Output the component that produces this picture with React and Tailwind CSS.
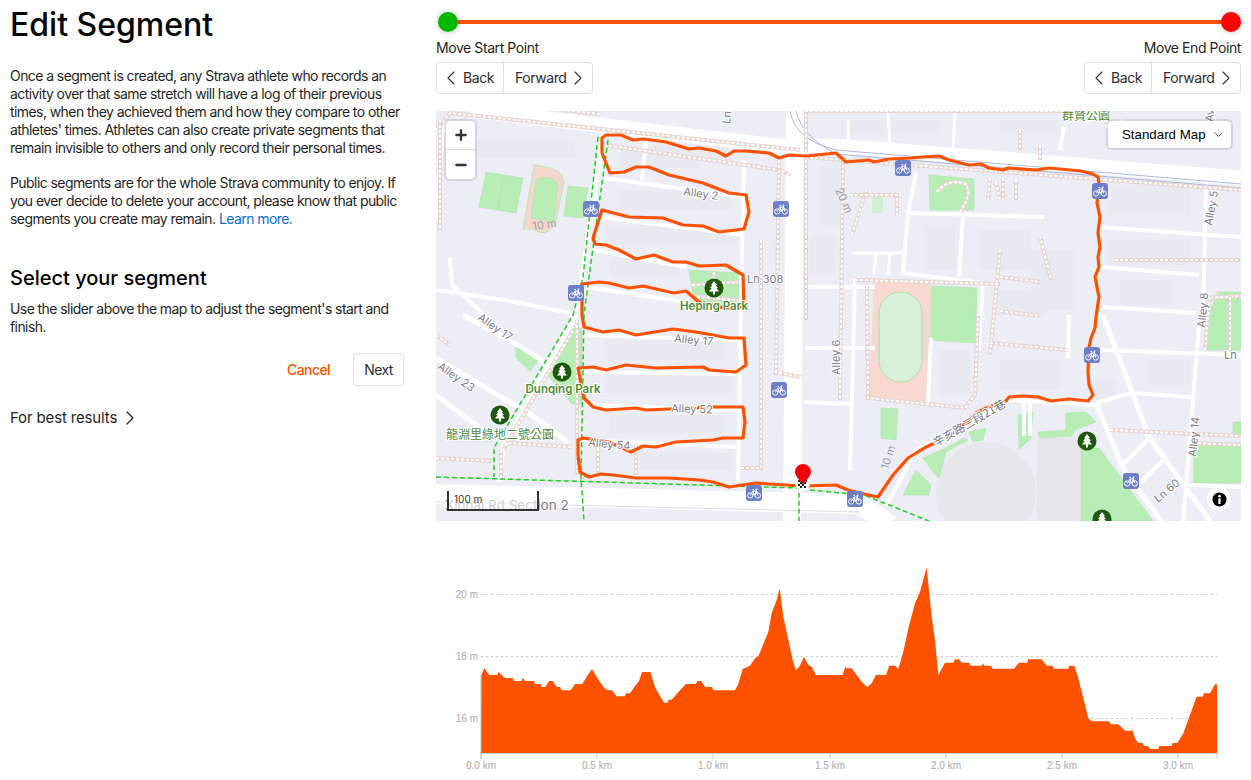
import React from 'react';
import { ChevronLeft, ChevronRight, ChevronDown, Plus, Minus } from 'lucide-react';

const route = '610,173 602,153 602,138 606,135 621,135 633,140 644,139 666,142 689,149 699,148 716,151 726,156 734,151 746,151 769,153 779,158 789,155 806,156 836,153 846,162 869,160 874,162 889,159 911,158 923,157 939,156 949,160 969,165 981,164 989,168 1003,170 1008,168 1036,170 1049,168 1081,171 1093,174 1098,177 1099,183 1097,203 1100,217 1098,233 1100,247 1098,257 1099,267 1095,277 1099,297 1096,317 1095,328 1091,338 1089,348 1088,372 1089,385 1093,395 1088,401 1069,399 1051,401 1038,397 1023,396 1009,397 1006,401 993,405 976,413 961,427 946,438 926,447 908,458 893,475 878,497 864,494 848,490 836,485 803,486 769,484 756,483 729,487 713,482 699,480 669,478 659,478 636,478 613,475 601,474 589,477 580,472 578,455 578,440 583,438 609,442 631,452 643,446 656,447 676,442 713,440 723,438 743,438 745,422 743,407 713,407 669,409 646,410 636,408 606,410 593,407 584,398 578,368 593,367 606,370 626,365 656,368 703,367 709,370 736,372 746,365 744,338 729,338 696,332 673,329 636,335 619,330 603,332 584,327 582,315 582,303 582,284 599,282 609,283 629,288 643,286 674,293 686,291 699,302 723,308 744,307 743,275 726,265 699,266 686,262 673,262 654,255 636,259 619,250 606,245 595,244 593,238 602,210 629,217 663,218 683,225 703,226 719,232 744,229 749,212 746,195 729,193 703,183 669,175 649,167 636,167 624,172 610,173';

const elevA = [[124,345],[133,325],[148,345],[172,345],[175,336],[195,354],[218,354],[222,363],[245,363],[248,354],[255,363],[282,363],[285,372],[302,372],[305,381],[316,381],[327,363],[338,363],[350,381],[360,381],[365,391],[392,391],[405,372],[427,372],[440,350],[456,327],[470,350],[490,381],[503,391],[516,391],[530,409],[555,409],[558,400],[570,400],[583,381],[597,363],[606,336],[631,336],[645,381],[655,400],[672,428],[683,428],[686,419],[695,419],[720,391],[738,372],[768,372],[772,363],[784,363],[795,381],[816,381],[820,391],[885,391],[895,372],[908,327],[930,317],[945,295],[955,289],[965,265],[985,215],[995,160],[1010,120],[1019,85],[1030,170],[1045,240],[1058,300],[1067,330],[1078,320],[1092,290],[1105,315],[1115,320],[1128,345],[1200,345]];
const elevB = [[8,345],[16,320],[20,325],[35,325],[50,345],[65,365],[82,382],[95,370],[108,345],[138,345],[148,317],[165,317],[175,327],[190,275],[205,205],[225,130],[240,95],[260,22],[275,170],[285,240],[295,345],[315,308],[340,308],[345,298],[358,298],[365,308],[388,308],[392,317],[425,317],[429,310],[432,317],[453,317],[458,326],[522,326],[537,308],[562,308],[565,298],[605,298],[620,317],[638,317],[640,326],[685,326],[688,317],[703,317],[715,355],[745,475],[755,484],[808,484],[812,493],[835,493],[855,512],[878,512],[885,535],[895,549],[908,549],[912,558],[925,558],[930,567],[955,567],[958,558],[995,558],[998,549],[1012,549],[1030,520],[1050,465],[1070,410],[1088,410],[1092,400],[1110,400],[1125,373],[1131,373]];

const elevPoints = [
  '481,753',
  ...elevA.map(([x, y]) => `${440 + x / 3},${560 + y / 3}`),
  ...elevB.map(([x, y]) => `${840 + x / 3},${560 + y / 3}`),
  '1217,753',
].join(' ');

const roads = [
  ['470,110 779,146 836,146 1241,178', 15],
  ['795,105 792,525', 18],
  ['430,494 860,504 890,525', 20],
  ['604,130 582,277 576,315 503,448 499,482', 5],
  ['604,178 743,197', 4], ['599,217 743,235', 4], ['594,250 686,267', 4], ['586,287 686,302', 4],
  ['583,335 741,340', 4], ['584,372 739,374', 4], ['583,405 738,410', 4], ['579,440 736,447', 4],
  ['744,160 741,300 738,482', 4], ['646,140 642,180', 4],
  ['444,118 436,220', 4], ['436,290 505,300 575,314', 4], ['463,315 523,348 556,370', 5],
  ['436,358 536,418 568,442', 5], ['436,395 496,440', 5], ['450,258 452,285 500,330', 4],
  ['916,173 908,213 903,273 983,283 979,350', 4], ['908,213 1044,217', 4], ['963,215 959,277', 4],
  ['853,253 906,253', 3], ['876,253 874,275', 3], ['890,253 888,275', 3], ['849,160 848,120', 3], ['890,150 888,111', 3], ['953,150 955,111', 3],
  ['1099,227 1241,237', 4], ['1099,267 1199,275', 4], ['1206,183 1203,323', 4], ['1103,307 1196,313', 4],
  ['1103,315 1149,437 1213,525', 5], ['1096,403 1123,468 1164,525', 5], ['1101,350 1241,355', 4],
  ['1096,403 1131,393 1191,397', 4], ['1199,325 1183,525', 4], ['1123,465 1149,438', 4], ['1141,482 1166,458', 4],
  ['1189,485 1241,487', 4], ['1009,400 1096,405', 4], ['916,450 886,506', 4], ['916,450 1006,403', 4],
  ['931,338 928,403', 4], ['1069,315 1068,358', 4], ['1024,400 1024,436', 4], ['1030,400 1030,436', 4], ['855,278 853,360 850,470', 4],
  ['1124,121 1106,127', 5], ['1064,127 1060,150', 4], ['805,287 875,287', 4], ['805,348 875,348', 4], ['804,402 850,404', 4],
];

const footways = [
  'M436 130 L450 113 L800 150', 'M604 145 L780 170 L790 175', 'M805 157 L1241 190', 'M806 152 L806 111 L1070 111',
  'M779 160 L776 375', 'M761 240 L761 468 L741 468', 'M779 373 L801 377', 'M440 120 L440 230', 'M806 160 L806 320',
  'M843 160 L840 400', 'M1115 260 L1241 260', 'M1020 130 L1020 150', 'M996 182 L1000 200', 'M990 178 L988 200', 'M1003 178 L1003 200', 'M1016 180 L1016 200',
  'M1000 250 L990 355', 'M1000 277 L1040 282', 'M1000 311 L1040 316', 'M990 343 L1068 350', 'M855 280 L1000 284',
  'M867 286 L868 398 L965 408 L975 395 L978 315', 'M852 235 L866 190', 'M850 195 L897 195 L897 215', 'M1040 236 L1051 280',
  'M937 192 Q948 178 966 184 Q972 195 960 212',
  'M503 450 L573 330', 'M501 450 L501 478', 'M577 320 L577 475', 'M436 458 L493 461', 'M508 443 L571 447', 'M436 335 L450 345', 'M579 470 L585 478', 'M636 445 L636 475', 'M598 443 L598 475',
  'M1110 430 L1240 436', 'M1193 443 L1240 445', 'M692 285 L738 282', 'M692 296 L738 300', 'M714 272 L714 307',
  'M1205 298 L1241 296', 'M1205 350 L1210 296', 'M1230 350 L1230 296', 'M1040 145 L1040 160', 'M600 114 L500 103',
];

const greens = [
  '486,172 523,178 516,213 479,207', '568,186 588,188 583,218 564,216', '689,270 738,273 740,307 695,307',
  '516,345 540,358 530,371 516,358', '574,328 545,372 572,404 582,404 582,328', '881,408 898,409 896,440 881,438',
  '929,286 977,288 975,343 929,340', '929,175 974,179 974,210 930,210',
  '1194,443 1241,443 1241,483 1194,483', '1233,422 1241,422 1241,435 1233,435', '1218,292 1241,292 1241,350 1205,350 1205,325',
  '1081,448 1099,448 1153,521 1081,521', '903,495 916,470 931,485 929,495', '923,458 946,448 964,438 968,440 946,452 939,478 933,472',
  '969,432 986,428 983,440 973,442', '1018,415 1033,412 1031,438 1019,450', '1038,432 1066,430 1066,413 1086,412 1096,422 1075,430 1072,436 1040,438',
];

const buildings = [
  [465, 140, 110, 18], [620, 148, 80, 20], [620, 190, 110, 20], [650, 145, 80, 15], [605, 225, 130, 20], [610, 258, 70, 18], [605, 340, 120, 20], [605, 375, 125, 18],
  [610, 415, 115, 18], [640, 452, 90, 18], [820, 165, 20, 60], [810, 235, 25, 40], [925, 225, 30, 45], [980, 230, 50, 40], [1030, 250, 45, 60], [995, 290, 50, 25],
  [1000, 360, 60, 30], [1110, 185, 80, 30], [1110, 240, 80, 25], [1120, 280, 50, 25], [1150, 360, 40, 25], [1090, 380, 25, 15], [940, 350, 30, 45], [455, 425, 40, 20], [850, 120, 90, 15],
  [1210, 460, 30, 25], [1000, 120, 60, 15], [1140, 120, 60, 15],
];

const bikes = [[591, 209], [781, 209], [576, 293], [779, 390], [754, 493], [855, 499], [903, 168], [1100, 191], [1092, 355], [1131, 481]];
const trees = [[714, 288], [562, 372], [500, 415], [1087, 441], [1102, 519]];

const labels = [
  ['Alley 2', 683, 195, 8], ['Ln 308', 747, 283, 0], ['Alley 17', 674, 342, 5], ['Alley 17', 477, 319, 35], ['Alley 23', 437, 368, 35],
  ['Alley 52', 671, 412, 2], ['Alley 54', 588, 446, 5], ['Alley 6', 840, 375, -90], ['Alley 5', 1212, 226, -80], ['Alley 8', 1205, 328, -85],
  ['Alley 14', 1196, 457, -85], ['Ln 60', 1158, 503, -40], ['Ln', 1224, 359, 0], ['Ln', 730, 124, -85], ['Ave', 1213, 122, -85],
];

function Footway({ d }) {
  return (
    <g fill="none">
      <path d={d} stroke="#e6d6d2" strokeWidth="4" />
      <path d={d} stroke="#ffffff" strokeWidth="2" strokeDasharray="3 2" />
    </g>
  );
}

function BikeMark({ x, y }) {
  return (
    <g transform={`translate(${x - 8} ${y - 8})`}>
      <rect width="16" height="16" rx="3" fill="#6d7fc6" />
      <g fill="none" stroke="#fff" strokeWidth="1">
        <circle cx="4.2" cy="10.5" r="2.6" />
        <circle cx="11.8" cy="10.5" r="2.6" />
        <path d="M4.2 10.5 L7 6 L10.5 6 L11.8 10.5 M7 6 L8 10.5 L10.5 6 M6.5 4.5 L8 4.5 M10.5 6 L10 4 L11.5 4" />
      </g>
    </g>
  );
}

function TreeMark({ x, y }) {
  return (
    <g transform={`translate(${x} ${y})`}>
      <circle r="9.5" fill="#1d5a0d" />
      <path d="M0 -7 L3 -3 L1.7 -3 L4 0 L2.3 0 L5 3.5 L1 3.5 L1 6.5 L-1 6.5 L-1 3.5 L-5 3.5 L-2.3 0 L-4 0 L-1.7 -3 L-3 -3 Z" fill="#fff" />
    </g>
  );
}

function MapCanvas() {
  return (
    <svg viewBox="436 111 805 410" className="block w-full h-full">
      <rect x="436" y="111" width="805" height="410" fill="#ecedf5" />
      {buildings.map(([x, y, w, h], i) => (
        <rect key={i} x={x} y={y} width={w} height={h} fill="#e9e9f0" />
      ))}
      <circle cx="986" cy="492" r="50" fill="#e7e6ea" />
      <rect x="1037" y="438" width="44" height="83" fill="#e7e6ea" />
      <rect x="872" y="193" width="11" height="20" fill="#d3f0d3" />
      {greens.map((p, i) => (
        <polygon key={i} points={p} fill="#b8eeb6" stroke="#a3e3a2" strokeWidth="0.5" />
      ))}
      <path d="M534 165 L540 166 Q563 168 564 182 L555 225 Q545 238 533 229 L523 229 Z" fill="#f6d7cf" stroke="#b5eab4" strokeWidth="1" />
      <path d="M536 180 Q548 174 558 183 L554 222 L531 218 Z" fill="#b8eeb6" stroke="#a3e3a2" strokeWidth="0.5" />
      <path d="M504 175 L498 210" stroke="#a3e3a2" strokeWidth="0.7" />
      <path d="M874 278 L931 282 L929 402 L869 398 Z" fill="#f8d8d0" />
      <rect x="879" y="292" width="43" height="90" rx="21.5" fill="#d7f0d7" stroke="#a3e3a2" strokeWidth="1" />
      <path d="M495 170 A45 30 0 0 0 495 212" fill="none" stroke="#d8dbe0" strokeWidth="0.7" />
      {roads.map(([p, w], i) => (
        <polyline key={i} points={p} fill="none" stroke="#ffffff" strokeWidth={w} strokeLinejoin="round" />
      ))}
      <path d="M436 502 L860 512" stroke="#dcdde8" strokeWidth="1" />
      <path d="M790 111 Q795 140 836 150 L1241 184 M796 111 Q802 136 836 154 L1241 188" fill="none" stroke="#99a6d8" strokeWidth="0.8" />
      {footways.map((d, i) => (
        <Footway key={i} d={d} />
      ))}
      <path d="M598 137 L583 277 L573 315 L494 448 L494 477 M608 140 L589 277 L584 315 L581 478 L584 521 M436 477 L799 488 L799 521 M810 490 L864 495 L929 521" fill="none" stroke="#1fd01f" strokeWidth="1.5" strokeDasharray="5 3" />
      <polyline points={route} fill="none" stroke="#fc5200" strokeWidth="3.2" strokeLinejoin="round" strokeLinecap="round" />

      <g fontFamily="Inter, sans-serif" fontSize="11" fill="#7c7c82" stroke="#ffffff" strokeWidth="2" style={{ paintOrder: 'stroke' }}>
        {labels.map(([t, x, y, r], i) => (
          <text key={i} x={x} y={y} transform={`rotate(${r} ${x} ${y})`}>{t}</text>
        ))}
        <text x="533" y="230" transform="rotate(-8 533 230)" fill="#9aa09c" stroke="none">10 m</text>
        <text x="888" y="470" transform="rotate(-72 888 470)" fill="#9aa09c" stroke="none">10 m</text>
        <text x="835" y="190" transform="rotate(65 835 190)" fill="#9aa09c" stroke="none">20 m</text>
        <text x="445" y="510" fontSize="13.5">Xinhai Rd Section 2</text>
      </g>
      <g fontSize="11.5" fontWeight="600" fill="#4f8a37" stroke="#ffffff" strokeWidth="2" textAnchor="middle" style={{ paintOrder: 'stroke' }} fontFamily="Inter, sans-serif">
        <text x="714" y="310">Heping Park</text>
        <text x="563" y="393">Dunqing Park</text>
      </g>
      <g fontSize="12" fill="#4f8a37" stroke="#ffffff" strokeWidth="2" textAnchor="middle" style={{ paintOrder: 'stroke' }} fontFamily="'Noto Sans CJK TC', sans-serif">
        <text x="500" y="439">龍淵里綠地二號公園</text>
        <text x="1086" y="120">群賢公園</text>
      </g>
      <text x="936" y="447" transform="rotate(-30 936 447)" fontSize="11.5" fill="#77777c" stroke="#ffffff" strokeWidth="2" style={{ paintOrder: 'stroke' }} fontFamily="'Noto Sans CJK TC', sans-serif">辛亥路三段21巷</text>

      {bikes.map(([x, y], i) => (
        <BikeMark key={i} x={x} y={y} />
      ))}
      {trees.map(([x, y], i) => (
        <TreeMark key={i} x={x} y={y} />
      ))}

      <circle cx="802.5" cy="483" r="7.5" fill="#fff" />
      <path d="M798 480h2v2h-2z M802 480h2v2h-2z M806 480h1v2h-1z M800 482h2v2h-2z M804 482h2v2h-2z M798 484h2v2h-2z M802 484h2v2h-2z M800 486h2v2h-2z M804 486h2v2h-2z" fill="#222" />
      <path d="M803 485 C800 480 795 476 795 472 A8 8 0 0 1 811 472 C811 476 806 480 803 485 Z" fill="#f00000" />
    </svg>
  );
}

function ElevationChart() {
  const grid = [[594.5, '20 m'], [656.5, '18 m'], [718.5, '16 m']];
  const ticks = [[481, '0.0 km'], [597, '0.5 km'], [713, '1.0 km'], [830, '1.5 km'], [946, '2.0 km'], [1062, '2.5 km'], [1178, '3.0 km']];
  return (
    <svg viewBox="436 560 805 220" className="block w-full h-[220px]">
      <g fontFamily="'Liberation Sans', sans-serif" fontSize="10" fill="#a9a9ae">
        {grid.map(([y, t]) => (
          <g key={t}>
            <line x1="481" x2="1217" y1={y} y2={y} stroke="#c9c9c9" strokeWidth="1" strokeDasharray="2 3" />
            <text x="478" y={y + 3.5} textAnchor="end">{t}</text>
          </g>
        ))}
        <polygon points={elevPoints} fill="#fc5200" />
        <line x1="481" x2="1217" y1="753.5" y2="753.5" stroke="#d6d6d6" />
        <line x1="481" x2="481" y1="675" y2="759" stroke="#b5b5b5" />
        <line x1="1217" x2="1217" y1="753" y2="759" stroke="#c9c9c9" />
        {ticks.map(([x, t]) => (
          <g key={t}>
            <line x1={x} x2={x} y1="753" y2="759" stroke="#c9c9c9" />
            <text x={x} y="769" textAnchor="middle">{t}</text>
          </g>
        ))}
      </g>
    </svg>
  );
}

function StepButtons() {
  return (
    <div className="inline-flex h-[32px] rounded border border-[#dfdfe8] text-sm leading-[18px] text-[#2d2d32]">
      <button className="flex w-[67px] items-center justify-end pr-[9px] border-r border-[#dfdfe8]">
        <ChevronLeft size={24} strokeWidth={1.1} />
        Back
      </button>
      <button className="flex w-[88px] items-center justify-start pl-[11px]">
        Forward
        <ChevronRight size={24} strokeWidth={1.1} />
      </button>
    </div>
  );
}

export default function App() {
  return (
    <div className="flex w-[1251px] h-[780px] overflow-hidden bg-white text-[#1f1f23] font-['Inter',sans-serif]">
      <div className="w-[404px] shrink-0 pl-[10px] text-sm leading-[18px] tracking-[-0.041em]">
        <h1 className="mt-[5px] text-[32px] leading-[40px] font-medium tracking-normal text-black">Edit Segment</h1>
        <p className="mt-[22px]">
          Once a segment is created, any Strava athlete who records an activity over that same stretch will have a log of their previous times, when they achieved them and how they compare to other athletes' times. Athletes can also create private segments that remain invisible to others and only record their personal times.
        </p>
        <p className="mt-[17px]">
          Public segments are for the whole Strava community to enjoy. If you ever decide to delete your account, please know that public segments you create may remain. <span className="text-[#0a6ccf]">Learn more.</span>
        </p>
        <h2 className="mt-[37px] text-xl leading-[26px] font-medium tracking-normal text-black">Select your segment</h2>
        <p className="mt-[9px]">Use the slider above the map to adjust the segment's start and finish.</p>
        <div className="mt-[17px] flex items-center justify-end">
          <button className="mr-[23px] font-medium text-[#fc5200]">Cancel</button>
          <button className="h-[33px] w-[51px] rounded border border-[#dfdfe8] text-[#2d2d32]">Next</button>
        </div>
        <div className="mt-[20px] flex items-center gap-px text-[15px] tracking-[-0.01em]">
          For best results
          <ChevronRight size={24} strokeWidth={1.25} />
        </div>
      </div>

      <div className="ml-[32px] w-[805px] shrink-0">
        <div className="relative h-[36px]">
          <div className="absolute left-[12px] right-[10px] top-[20px] h-[4px] bg-[#fc5200]" />
          <div className="absolute left-[2px] top-[12px] size-5 rounded-full bg-[#00b900] shadow-[0_0_6px_rgba(0,0,0,0.25)]" />
          <div className="absolute right-0 top-[12px] size-5 rounded-full bg-[#ff0000] shadow-[0_0_6px_rgba(0,0,0,0.25)]" />
        </div>
        <div className="flex justify-between text-sm leading-[18px] tracking-[-0.03em] text-[#1f1f23]">
          <div>
            <div className="mt-[3px] mb-[5px]">Move Start Point</div>
            <StepButtons />
          </div>
          <div className="flex flex-col items-end">
            <div className="mt-[3px] mb-[5px]">Move End Point</div>
            <StepButtons />
          </div>
        </div>
        <div className="relative mt-[17px] h-[410px] overflow-hidden">
          <MapCanvas />
          <div className="absolute left-[10px] top-[10px] w-[29px] rounded bg-white shadow-[0_0_0_2px_rgba(0,0,0,0.1)]">
            <div className="flex h-[29px] items-center justify-center border-b border-[#ddd] text-[#333]">
              <Plus size={16} strokeWidth={3.5} />
            </div>
            <div className="flex h-[29px] items-center justify-center text-[#333]">
              <Minus size={16} strokeWidth={3.5} />
            </div>
          </div>
          <div className="absolute right-[10px] top-[10px] flex h-[27px] w-[123px] items-center gap-[5px] rounded bg-white pl-[14px] text-[13.3px] font-['Liberation_Sans',sans-serif] text-black shadow-[0_0_0_2px_rgba(0,0,0,0.1)]">
            Standard Map
            <ChevronDown size={15} strokeWidth={1} />
          </div>
          <div className="absolute left-[11px] top-[380px] h-[20px] w-[92px] border-2 border-t-0 border-[#333] bg-white/60 pl-[5px] text-[10px] leading-[17px] text-[#333]">
            100 m
          </div>
          <div className="absolute left-[771px] top-[376px] flex size-6 items-center justify-center rounded-full bg-white">
            <svg viewBox="0 0 16 16" className="size-[15px]">
              <circle cx="8" cy="8" r="7.5" fill="#000" />
              <circle cx="8" cy="4.4" r="1.4" fill="#fff" />
              <rect x="6.8" y="6.8" width="2.4" height="6" fill="#fff" />
            </svg>
          </div>
        </div>
        <div className="mt-[39px]">
          <ElevationChart />
        </div>
      </div>
    </div>
  );
}
